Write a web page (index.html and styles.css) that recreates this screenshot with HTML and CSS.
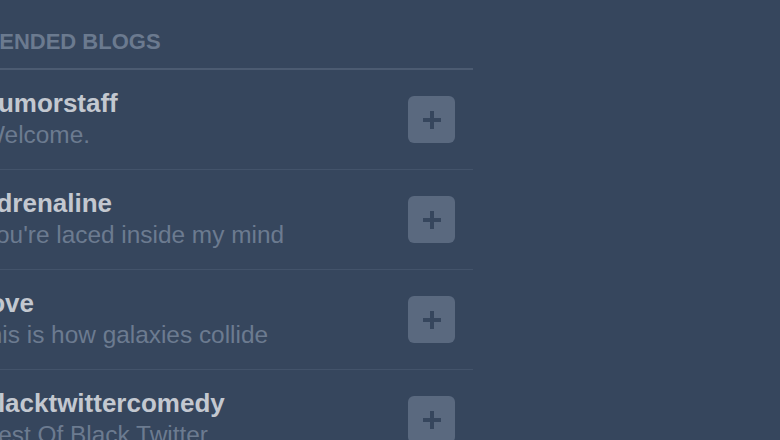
FILE: index.html
```html
<!DOCTYPE html>
<html lang="en">
<head>
  <meta charset="UTF-8" />
  <meta name="viewport" content="width=device-width, initial-scale=1.0" />
  <title>Recommended blogs</title>
  <link rel="stylesheet" href="styles.css">
</head>
<body>
  <div class="sidebar">
    <h2 class="sidebar-title">RECOMMENDED BLOGS</h2>
    <ul class="blog-list">
      <li class="blog">
        <div class="blog-info">
          <div class="blog-name">humorstaff</div>
          <div class="blog-desc">Welcome.</div>
        </div>
        <button class="follow" title="Follow"><svg viewBox="0 0 20 20" width="20" height="20"><path d="M10 1v18M1 10h18" /></svg></button>
      </li>
      <li class="blog">
        <div class="blog-info">
          <div class="blog-name">adrenaline</div>
          <div class="blog-desc">You're laced inside my mind</div>
        </div>
        <button class="follow" title="Follow"><svg viewBox="0 0 20 20" width="20" height="20"><path d="M10 1v18M1 10h18" /></svg></button>
      </li>
      <li class="blog">
        <div class="blog-info">
          <div class="blog-name">love</div>
          <div class="blog-desc">this is how galaxies collide</div>
        </div>
        <button class="follow" title="Follow"><svg viewBox="0 0 20 20" width="20" height="20"><path d="M10 1v18M1 10h18" /></svg></button>
      </li>
      <li class="blog">
        <div class="blog-info">
          <div class="blog-name">blacktwittercomedy</div>
          <div class="blog-desc">Best Of Black Twitter</div>
        </div>
        <button class="follow" title="Follow"><svg viewBox="0 0 20 20" width="20" height="20"><path d="M10 1v18M1 10h18" /></svg></button>
      </li>
    </ul>
  </div>
</body>
</html>
```

FILE: styles.css
```css
html, body {
  margin: 0;
  padding: 0;
  height: 100%;
}

body {
  font-family: "Liberation Sans", Arial, sans-serif;
  background: #36465d;
  overflow: hidden;
}

.sidebar {
  width: 491px;
  margin-left: -18px;
}

.sidebar-title {
  margin: 29px 0 0;
  padding-bottom: 13px;
  border-bottom: 2px solid #4c5b71;
  font-size: 22px;
  line-height: 26px;
  font-weight: bold;
  color: #6b7a8f;
  text-indent: -83px;
  white-space: nowrap;
}

.blog-list {
  list-style: none;
  margin: 0;
  padding: 0;
}

.blog {
  display: flex;
  align-items: center;
  justify-content: space-between;
  padding: 17px 18px 18px 0;
  border-bottom: 1px solid #43536a;
}

.blog-name {
  font-size: 26px;
  line-height: 32px;
  font-weight: bold;
  color: #c3c8d0;
}

.blog-desc {
  font-size: 24.4px;
  line-height: 32px;
  color: #6c7b90;
}

.follow {
  width: 47px;
  height: 47px;
  margin-top: 1px;
  border: none;
  border-radius: 6px;
  background: #5a697f;
  display: flex;
  align-items: center;
  justify-content: center;
  padding: 0;
  cursor: pointer;
}

.follow svg path {
  stroke: #36465d;
  stroke-width: 4;
  fill: none;
}
```
